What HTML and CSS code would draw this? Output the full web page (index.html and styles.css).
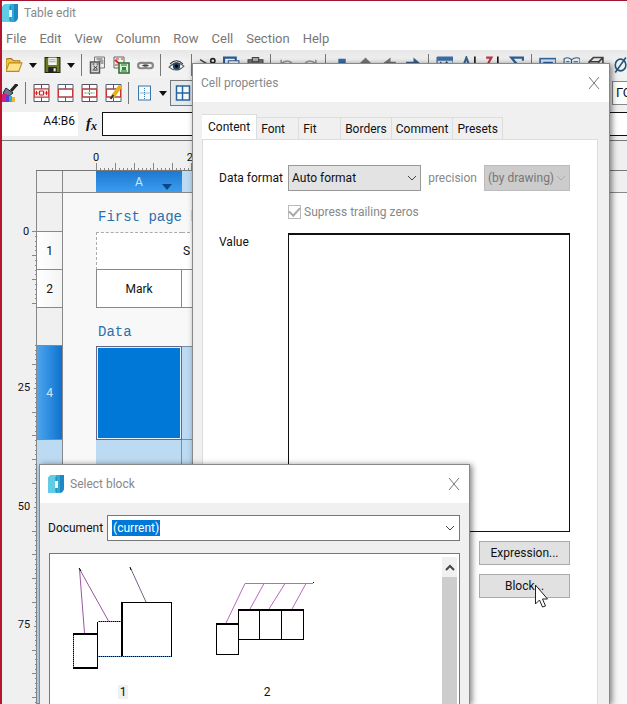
FILE: index.html
```html
<!DOCTYPE html>
<html lang="en">
<head>
<meta charset="utf-8">
<title>Table edit</title>
<link rel="stylesheet" href="styles.css">
</head>
<body>
<div class="app">
  <header class="titlebar">
    <svg class="logo" viewBox="0 0 16 18"><path d="M5 0H16V13Q16 18 11 18H0V5Q0 0 5 0Z" fill="#2fa9d6"/><path d="M5 0H8V18H0V5Q0 0 5 0Z" fill="#62cbe6"/><path d="M12 0h4v13q0 3-4 5z" fill="#2087c4"/><path d="M7 6h3v7H7z" fill="#e9fbff"/><path d="M8 2v4M8 13v4" stroke="#1685b5"/></svg>
    <span>Table edit</span>
  </header>
  <nav class="menu">
    <a href="#">File</a><a href="#">Edit</a><a href="#">View</a><a href="#">Column</a><a href="#">Row</a><a href="#">Cell</a><a href="#">Section</a><a href="#">Help</a>
  </nav>
  <div class="toolbar">
    <button class="tool" aria-label="Open"><svg viewBox="0 0 16 16"><path d="M0 14V3l1-1h4l2 2h6v3" fill="#f4c542" stroke="#a87716"/><path d="M0 14L3 6h12l-3 8z" fill="#ffe28a" stroke="#b98a1d"/></svg></button>
    <button class="caret" aria-label="Open options"></button>
    <button class="tool" aria-label="Save"><svg viewBox="0 0 16 16"><path d="M1 1h14v14H1z" fill="#6b7a22" stroke="#20240c"/><path d="M4 1h8v7H4z" fill="#f4f6f4"/><path d="M5 3h6M5 5h6" stroke="#9aa"/><path d="M4 10h8v5H4z" fill="#222"/><path d="M9 11h2v3H9z" fill="#eee"/></svg></button>
    <button class="caret" aria-label="Save options"></button>
    <i class="sep"></i>
    <button class="tool" aria-label="Copy properties"><svg viewBox="0 0 16 18"><path d="M5 1h10v11H5z" fill="#eee" stroke="#777"/><path d="M7 3h6M9 5h5M11 7h3" stroke="#555"/><path d="M1 6h9v11H1z" fill="#d8d8d8" stroke="#555" stroke-width="1.500"/><path d="M3 8h2M7 8h2M3 14h5M4 10l4 3M8 10l-4 3" stroke="#333"/></svg></button>
    <button class="tool" aria-label="Paste properties"><svg viewBox="0 0 17 18"><path d="M1 1h10v11H1z" fill="#f5eeee" stroke="#666"/><path d="M2 4l6 5" stroke="#d22" stroke-width="2"/><path d="M3 3h3M8 3h2M2 9h3" stroke="#b33"/><path d="M6 7h10v10H6z" fill="#d8f0d4" stroke="#286a2c" stroke-width="1.500"/><path d="M8 9h6M8 15h6" stroke="#286a2c"/><path d="M9 11h4v3H9z" fill="#2c8b35"/></svg></button>
    <button class="tool" aria-label="Link"><svg viewBox="0 0 16 16"><rect x="1" y="6" width="8" height="5" rx="2.5" fill="none" stroke="#888" stroke-width="2"/><rect x="7" y="6" width="8" height="5" rx="2.5" fill="none" stroke="#888" stroke-width="2"/><path d="M5 8.500h6" stroke="#444"/></svg></button>
    <i class="sep"></i>
    <button class="tool" aria-label="Preview"><svg viewBox="0 0 16 16"><path d="M1 10Q8 3 15 9Q8 16 1 10Z" fill="#fff" stroke="#555"/><circle cx="8" cy="9" r="3.500" fill="#246"/><circle cx="8" cy="9" r="1.500" fill="#000"/><path d="M2 7Q8 1 14 7" fill="none" stroke="#333"/></svg></button>
    <i class="sep"></i>
    <button class="tool" aria-label="Cut"><svg viewBox="0 0 16 16"><path d="M1 3l10 6M13 6L4 13" stroke="#444" stroke-width="1.500"/><circle cx="13" cy="4" r="2" fill="none" stroke="#222" stroke-width="1.500"/></svg></button>
    <button class="tool" aria-label="Copy"><svg viewBox="0 0 16 16"><path d="M1 1h11v11H1z" fill="#eef5ff" stroke="#2d5a94" stroke-width="2"/><path d="M5 4h10v11H5z" fill="#fff" stroke="#2d5a94"/></svg></button>
    <button class="tool" aria-label="Paste"><svg viewBox="0 0 16 16"><path d="M1 3h14v12H1z" fill="#777" stroke="#444"/><path d="M5 1h6v4H5z" fill="#aaa" stroke="#444"/></svg></button>
    <i class="sep"></i>
    <button class="tool" aria-label="Undo"><svg viewBox="0 0 16 16"><path d="M3 3v5h5M3 7Q8 2 13 6" fill="none" stroke="#999" stroke-width="1.500"/></svg></button>
    <button class="tool" aria-label="Redo"><svg viewBox="0 0 16 16"><path d="M13 3v5H8M13 7Q8 2 3 6" fill="none" stroke="#999" stroke-width="1.500"/></svg></button>
    <i class="sep"></i>
    <button class="tool" aria-label="Move down"><svg viewBox="0 0 16 16"><path d="M5 2h7v4h4l-7 8-8-8h4z" fill="#3c6da6"/></svg></button>
    <button class="tool" aria-label="Move up"><svg viewBox="0 0 16 16"><path d="M8 1l7 7h-4v7H5V8H1z" fill="#777"/></svg></button>
    <button class="tool" aria-label="Move left"><svg viewBox="0 0 16 16"><path d="M9 1v4h5v5H9v4L1 7z" fill="#777"/></svg></button>
    <button class="tool" aria-label="Move right"><svg viewBox="0 0 16 16"><path d="M8 1v14l7-8zM1 5h7v5H1z" fill="#3f5f87"/></svg></button>
    <i class="sep"></i>
    <button class="tool" aria-label="Filter"><svg viewBox="0 0 16 16"><path d="M1 1h15v13H1z" fill="#dcebf8" stroke="#315e93"/><path d="M1 0h15v4H1z" fill="#3c6da6"/><path d="M4 5l3 4 3-4 3 4" fill="none" stroke="#444"/></svg></button>
    <button class="tool" aria-label="Sort ascending"><svg viewBox="0 0 16 16"><path d="M2 12L6 1l4 11M4 7h5" fill="none" stroke="#3c6493" stroke-width="2"/><path d="M14 0v15" stroke="#111" stroke-width="1.500"/></svg></button>
    <button class="tool" aria-label="Sort descending"><svg viewBox="0 0 16 16"><path d="M2 1h5L2 10h5" fill="none" stroke="#b43a46" stroke-width="2"/><path d="M13 0v15" stroke="#111" stroke-width="1.500"/></svg></button>
    <button class="tool" aria-label="Sum"><svg viewBox="0 0 16 16"><path d="M14 4V1H3l6 7-6 6h11v-3" fill="none" stroke="#2c5c94" stroke-width="2"/></svg></button>
    <i class="sep"></i>
    <button class="tool" aria-label="Field"><svg viewBox="0 0 16 16"><rect x="1" y="2" width="15" height="12" fill="#d5e8f8" stroke="#2f659f" stroke-width="1.500"/><path d="M4 6h9" stroke="#2f659f" stroke-width="2"/></svg></button>
    <button class="tool" aria-label="Library"><svg viewBox="0 0 16 16"><path d="M1 2q4-2 7 1q4-3 8-1v12H1zM8 3v11" fill="#edf5fb" stroke="#3a5878"/><path d="M3 5h3M10 5h4" stroke="#3a5878"/></svg></button>
    <button class="tool" aria-label="Block"><svg viewBox="0 0 16 16"><path d="M2 5l4-4h9v9l-4 4H2zM2 5h9v9M11 5l4-4" fill="#eee" stroke="#444" stroke-width="1.500"/></svg></button>
    <button class="tool" aria-label="Diameter"><svg viewBox="0 0 16 16"><ellipse cx="9" cy="8" rx="5" ry="5.500" fill="none" stroke="#23567f" stroke-width="1.500"/><path d="M4 15L14 1" stroke="#23567f" stroke-width="1.500"/></svg></button>
  </div>
  <div class="toolbar second">
    <button class="tool brush" aria-label="Match format"><svg viewBox="0 0 16 18"><path d="M15 0L9 7" stroke="#222" stroke-width="3"/><path d="M4 4L11 9l-5 4-5-4z" fill="#667b8f" stroke="#222"/><path d="M0 10h5v8H0z" fill="#d21f7b"/><path d="M4 11h4v7H4z" fill="#6339d6"/><path d="M7 12h3v6H7z" fill="#1bb4c9"/><path d="M10 13h3v5h-3z" fill="#f3b72d"/></svg></button>
    <i class="sep"></i>
    <button class="tool" aria-label="Merge"><svg viewBox="0 0 16 18"><path d="M.500 .500h15v17H.500zM.500 5h15M.500 13h15M8 .500V5M8 13v4.500" fill="#fff" stroke="#5b4f5d"/><path d="M1 5h14v8H1z" fill="#fbe9e9" stroke="#c44"/><path d="M1 9h4M11 9h4M3 7v4M13 7v4M6 11V7h4v4z" fill="none" stroke="#c22"/></svg></button>
    <button class="tool" aria-label="Split"><svg viewBox="0 0 16 18"><path d="M.500 .500h15v17H.500zM.500 5h15M.500 13h15M8 .500V5M8 13v4.500" fill="#fff" stroke="#4d6077"/><path d="M1 5h14v8H1z" fill="none" stroke="#c33"/></svg></button>
    <button class="tool" aria-label="Split cells"><svg viewBox="0 0 16 18"><path d="M.500 .500h15v17H.500zM.500 5h15M.500 13h15M8 .500V5M8 13v4.500" fill="#fff" stroke="#594f5d"/><path d="M1 5h14v8H1z" fill="none" stroke="#c33"/><path d="M3 9h10M8 6v6" stroke="#3a9b50" stroke-dasharray="2 1"/></svg></button>
    <button class="tool" aria-label="Edit cell"><svg viewBox="0 0 16 18"><path d="M.500 .500h15v17H.500zM.500 5h15M.500 13h15M8 .500V5M8 13v4.500" fill="#fff" stroke="#4d6077"/><path d="M1 5h14v8H1z" fill="none" stroke="#c33"/><path d="M15 2L7 13" stroke="#e6b11e" stroke-width="4"/><path d="M8 11l-3 4" stroke="#333" stroke-width="2"/></svg></button>
    <i class="sep"></i>
    <button class="tool" aria-label="Borders"><svg viewBox="0 0 16 18"><rect x="2" y="2" width="12" height="14" fill="#f4f9fd" stroke="#3976aa"/><path d="M8 4v11M4 9h9" stroke="#3976aa" stroke-dasharray="1 1"/></svg></button>
    <button class="caret" aria-label="Border options"></button>
    <button class="tool pressed" aria-label="Grid"><svg viewBox="0 0 16 18"><path d="M2 2h13v14H2zM8 2v14M2 9h13" fill="#f4f9fd" stroke="#28659d" stroke-width="1.500"/></svg></button>
    <select class="standard" aria-label="Standard"><option>ГО</option></select>
  </div>
  <div class="formula">
    <output class="address">A4:B6</output>
    <label class="fx" for="formula">f<sub>x</sub></label>
    <input id="formula" type="text">
  </div>
  <main class="sheet">
    <div class="corner"></div>
    <svg class="top-ruler">
      <defs><pattern id="hx" x="60" y="0" width="19" height="30" patternUnits="userSpaceOnUse"><path d="M.500 22v8M4.500 27v3M8.500 27v3M12.500 27v3M16.500 27v3" stroke="#888"/></pattern></defs>
      <rect x="60" width="306" height="30" fill="url(#hx)"/>
      <text x="60" y="20">0</text><text x="157" y="20">25</text>
    </svg>
    <svg class="left-ruler">
      <defs><pattern id="vx" x="0" y="61" width="36" height="24" patternUnits="userSpaceOnUse"><path d="M30 .500h6M33 5.500h3M33 10.500h3M33 15.500h3M33 19.500h3" stroke="#888"/></pattern>
      <pattern id="vy" x="0" y="194" width="36" height="119" patternUnits="userSpaceOnUse"><path d="M30 .500h6M33 5.500h3M33 10.500h3M33 14.500h3M33 19.500h3M32 24.500h4M33 29.500h3M33 33.500h3M33 38.500h3M33 43.500h3M30 48.500h6M33 52.500h3M33 57.500h3M33 62.500h3M33 67.500h3M30 71.500h6M33 76.500h3M33 81.500h3M33 86.500h3M33 90.500h3M30 95.500h6M33 100.500h3M33 105.500h3M33 109.500h3M33 114.500h3" stroke="#888"/></pattern></defs>
      <rect y="61" width="36" height="76" fill="url(#vx)"/>
      <rect y="175" width="36" height="100%" fill="url(#vy)"/>
      <text x="24" y="65">0</text><text x="22" y="221">25</text><text x="22" y="340">50</text><text x="22" y="458">75</text>
    </svg>
    <table class="cells">
      <colgroup><col class="c-head"><col class="c-gap"><col class="c-a"><col class="c-b"><col></colgroup>
      <tr class="r-head"><th></th><th class="plain"></th><th class="col-a">A <i class="menu-mark"></i></th><th class="col-b"></th><th class="plain"></th></tr>
      <tr class="r-first"><th></th><td></td><td class="section" colspan="3">First page h</td></tr>
      <tr class="r-row"><th class="num">1</th><td></td><td class="dashed"></td><td class="spec">S</td><td></td></tr>
      <tr class="r-row"><th class="num">2</th><td></td><td class="mark">Mark</td><td class="box"></td><td></td></tr>
      <tr class="r-row"><th></th><td></td><td class="section" colspan="3">Data</td></tr>
      <tr class="r-data"><th class="selected">4</th><td></td><td class="active"></td><td class="range"></td><td></td></tr>
      <tr><th class="soft"></th><td></td><td class="range"></td><td class="range"></td><td></td></tr>
    </table>
  </main>
</div>

<section class="dialog props" aria-label="Cell properties">
  <header class="dialog-head"><span>Cell properties</span>
    <button class="close" aria-label="Close"><svg viewBox="0 0 12 14"><path d="M1 1l10 12M11 1L1 13" stroke="#777"/></svg></button></header>
  <div class="tabs" role="tablist">
    <button class="tab current" role="tab">Content</button><button class="tab t-font" role="tab">Font</button><button class="tab t-font" role="tab">Fit</button><button class="tab" role="tab">Borders</button><button class="tab" role="tab">Comment</button><button class="tab" role="tab">Presets</button>
  </div>
  <div class="panel">
    <label for="format">Data format</label>
    <div class="format">
      <span class="combo grow"><select id="format"><option>Auto format</option></select><svg viewBox="0 0 10 6"><path d="M1 1l4 4 4-4" fill="none" stroke="#444"/></svg></span>
      <label class="muted" for="precision">precision</label>
      <span class="combo off"><select id="precision" disabled><option>(by drawing)</option></select><svg viewBox="0 0 10 6"><path d="M1 1l4 4 4-4" fill="none" stroke="#aaa"/></svg></span>
    </div>
    <label class="check muted"><input type="checkbox" checked disabled>Supress trailing zeros</label>
    <label class="value-label" for="value">Value</label>
    <textarea id="value"></textarea>
    <div class="actions"><button>Expression...</button><button>Block...</button></div>
  </div>
</section>

<section class="dialog blocks" aria-label="Select block">
  <header class="dialog-head">
    <svg class="logo" viewBox="0 0 16 18"><path d="M5 0H16V13Q16 18 11 18H0V5Q0 0 5 0Z" fill="#2fa9d6"/><path d="M5 0H8V18H0V5Q0 0 5 0Z" fill="#62cbe6"/><path d="M12 0h4v13q0 3-4 5z" fill="#2087c4"/><path d="M7 6h3v7H7z" fill="#e9fbff"/><path d="M8 2v4M8 13v4" stroke="#1685b5"/></svg>
    <span>Select block</span>
    <button class="close" aria-label="Close"><svg viewBox="0 0 12 14"><path d="M1 1l10 12M11 1L1 13" stroke="#777"/></svg></button></header>
  <div class="document"><span id="doc-label">Document</span>
    <button class="doc-combo" role="combobox" aria-labelledby="doc-label doc-value" aria-expanded="false"><mark id="doc-value">(current)</mark><svg viewBox="0 0 10 6"><path d="M1 1l4 4 4-4" fill="none" stroke="#444"/></svg></button></div>
  <div class="list">
    <div class="thumbs">
      <figure><svg viewBox="0 0 144 122"><g fill="none" shape-rendering="crispEdges"><path d="M23.500 79.500h24v34h-24z" stroke="#000"/><path d="M23 79.500h24M23.500 80v33" stroke="#5a86b5" stroke-dasharray="1 1"/><path d="M23 113.500h25" stroke="#000" stroke-width="2"/><path d="M47.500 67.500v35h74V48.500H72v54" stroke="#000"/><path d="M72 48v54M23 80h24" stroke="#000" stroke-width="2"/><path d="M48 67.500h24" stroke="#000"/><path d="M48 67.500h24M48 102.500h73" stroke="#5a86b5" stroke-dasharray="1 1"/></g><path d="M29.500 15l5 64M29.500 15l29 52" stroke="#9b55a5" fill="none"/><path d="M80.500 14l15.500 34" stroke="#7b6088"/><path d="M29 14l2 3M80 13l1 3" stroke="#000"/></svg><figcaption><span>1</span></figcaption></figure>
      <figure><svg viewBox="0 0 144 122"><g fill="none" stroke="#000" shape-rendering="crispEdges"><path d="M22.500 69.500h22v31h-22zM44.500 55.500h65v30h-65zM65.500 55v30M87.500 55v30"/><path d="M22 70h23M44 56h66" stroke-width="2"/></g><path d="M119 29.500H51L32 69M70 29.500L56 55M91 29.500L75 55M112 29.500L98 55" fill="none" stroke="#bd67bd"/><path d="M119 28.500h1" stroke="#000"/></svg><figcaption>2</figcaption></figure>
    </div>
    <div class="scroll"><button aria-label="Scroll up"><svg viewBox="0 0 10 7"><path d="M1 6l4-4 4 4" fill="none" stroke="#444" stroke-width="2"/></svg></button></div>
  </div>
</section>
<svg class="pointer" viewBox="0 0 13 24"><path d="M.500 1v19l4-4 3 7 3-1-3-7h5z" fill="#fff" stroke="#222"/></svg>
</body>
</html>
```
FILE: styles.css
```css
* { box-sizing: border-box; }
body { margin: 0; height: 100vh; overflow: hidden; position: relative; font: 12px/16px Roboto, "Liberation Sans", sans-serif; color: #111; background: #f0f0f0; }
button, input, select, textarea { font: inherit; color: inherit; margin: 0; padding: 0; border: 0; border-radius: 0; background: none; appearance: none; }
svg { display: block; }

.app { height: 100%; display: flex; flex-direction: column; border-left: 2px solid #b5142c; border-top: 1px solid #a01530; }
.titlebar { height: 23px; flex: none; display: flex; align-items: center; gap: 6px; background: #fff; color: #888; }
.logo { width: 16px; height: 18px; }
.menu { height: 26px; flex: none; display: flex; align-items: center; gap: 13px; padding: 4px 4px 0; background: #fff; font-size: 13px; }
.menu a { color: #777; text-decoration: none; }

.toolbar { height: 28px; flex: none; display: flex; align-items: center; overflow: hidden; padding-top: 2px; background: linear-gradient(#e7e7e7, #f2f2f2 40%); }
.tool { width: 24px; height: 24px; flex: none; display: grid; place-items: center; }
.tool svg { width: 17px; height: 18px; }
.caret { width: 14px; height: 24px; flex: none; display: grid; place-items: center; }
.caret::before { content: ""; border: 4px solid transparent; border-top: 5px solid #111; border-bottom: 0; }
.sep { width: 7px; height: 22px; flex: none; background: linear-gradient(#777, #777) center / 1px 100% no-repeat; }
.second { height: 30px; padding: 0; background: #f0f0f0; }
.brush { width: 20px; justify-items: start; }
.brush svg { width: 16px; }
.pressed { height: 26px; border: 1px solid #777; background: #e4e9ee; }
.standard { width: 15px; height: 24px; margin-left: auto; padding-left: 3px; border: 1px solid #888; border-right: 0; background: #fff; font-size: 13px; }

.formula { height: 33px; flex: none; display: flex; padding: 4px 0; border-bottom: 1px solid #777; }
.address { width: 76px; padding: 1px 3px; background: #fff; text-align: right; }
.fx { width: 24px; padding: 3px 0 0 8px; font: italic bold 15px/16px "Liberation Serif", serif; }
.fx sub { font-size: 12px; line-height: 8px; vertical-align: -2px; }
.formula input { flex: 1; min-width: 0; border: 1px solid #111; border-right: 0; background: #fff; }

.sheet { flex: 1; min-height: 0; overflow: hidden; display: grid; grid-template: 29px 1fr / 34px 1fr; background: #f0f0f0; }
.top-ruler { width: 100%; height: 29px; }
.left-ruler { width: 34px; height: 100%; }
.sheet text { font-size: 11px; fill: #111; text-anchor: middle; }
.cells { width: 100%; height: 100%; table-layout: fixed; border-collapse: separate; border-spacing: 0; border-top: 1px solid #777; background: #f8f8f8; }
.c-head { width: 27px; } .c-gap { width: 33px; } .c-a { width: 86px; } .c-b { width: 220px; }
.r-head { height: 22px; } .r-first { height: 39px; } .r-row { height: 38px; } .r-data { height: 94px; }
.cells th, .cells td { padding: 0; font-weight: 400; text-align: center; }
.cells th { border-bottom: 1px solid #888; background: #f0f0f0; }
.cells th:first-child { border-left: 1px solid #888; border-right: 1px solid #888; }
.cells .num { background: linear-gradient(90deg, #fff, #f4f4f4); }
.cells .col-a { position: relative; color: #cfe8ff; background: linear-gradient(#1e78cf, #3a9df0); }
.menu-mark { position: absolute; right: 10px; bottom: 2px; border: 5px solid transparent; border-top: 6px solid #0b4787; border-bottom: 0; }
.cells .col-b, .cells .soft { background: #bcdaf2; }
.cells .selected { color: #cfe8ff; background: linear-gradient(90deg, #4da5ee, #0f72cf); }
.cells .section { padding: 16px 0 0 2px; text-align: left; vertical-align: top; color: #2a6fae; font: 14px/16px "Liberation Mono", monospace; }
.cells .dashed { border: 1px dashed #aaa; border-right: 0; border-bottom: 1px solid #888; background: #fff; }
.cells .spec { padding-left: 1px; text-align: left; border-top: 1px dashed #aaa; border-bottom: 1px solid #888; background: #fff; }
.cells .mark { border: 1px solid #888; border-top: 0; background: #fff; }
.cells .box { border-bottom: 1px solid #888; background: #fff; }
.cells .range { border: 1px solid #7890a5; border-left: 0; border-top: 0; background: #bcdaf2; }
.r-data td.range { border-top: 1px solid #7890a5; }
.cells .active { border: 1px solid #668; background: #0078d7; box-shadow: inset 0 0 0 1px #e4f2ff; }

.dialog { position: absolute; bottom: 0; display: flex; flex-direction: column; border: 1px solid #888; border-bottom: 0; background: #f0f0f0; box-shadow: 2px 1px 6px rgba(0, 0, 0, .5); }
.props { top: 63px; left: 192px; right: 17px; }
.blocks { top: 464px; left: 39px; right: 157px; }
.dialog-head { height: 38px; flex: none; display: flex; align-items: center; gap: 6px; padding: 0 9px 0 8px; background: #fff; color: #888; }
.close { margin-left: auto; width: 12px; height: 14px; }
.tabs { flex: none; display: flex; align-items: flex-end; height: 37px; padding: 0 9px; }
.tab { height: 22px; padding: 0 4px; border: 1px solid #ddd; border-bottom: 0; border-left: 0; text-align: left; }
.tab.current { height: 25px; padding: 0 6px; background: #fff; }
.t-font { width: 42px; }
.panel { flex: 1; min-height: 0; margin: 0 11px 0 9px; padding: 25px 27px 0 16px; display: grid; grid-template: 26px 28px 313px auto / 69px 1fr; align-items: center; align-content: start; background: #fff; border: 1px solid #ddd; border-bottom: 0; }
.format { display: flex; align-items: center; gap: 7px; }
.combo { position: relative; height: 26px; width: 86px; }
.combo.grow { width: auto; flex: 1; }
.combo select { width: 100%; height: 100%; padding: 0 3px; border: 1px solid #999; background: #e3e3e3; opacity: 1; }
.combo.off select { border-color: #bbb; background: #ccc; color: #777; }
.combo svg { position: absolute; right: 4px; top: 10px; width: 10px; height: 6px; }
.muted { color: #888; }
.check { grid-column: 2; display: flex; align-items: center; gap: 3px; padding-top: 14px; }
.check input { width: 13px; height: 14px; border: 1px solid #bbb; display: grid; place-items: center; }
.check input::before { content: ""; width: 9px; height: 5px; border: solid #aaa; border-width: 0 0 2px 2px; rotate: -48deg; margin-bottom: 3px; }
.value-label { align-self: start; padding-top: 15px; }
.panel textarea { align-self: end; width: 100%; height: 299px; border: 1px solid #111; border-top-width: 2px; resize: none; background: #fff; }
.actions { grid-column: 2; justify-self: end; width: 91px; display: grid; gap: 9px; padding-top: 9px; }
.actions button { height: 24px; border: 1px solid #aaa; background: #e1e1e1; }

.document { display: flex; align-items: center; gap: 4px; padding: 12px 9px 12px 8px; }
.doc-combo { flex: 1; display: flex; align-items: center; justify-content: space-between; height: 26px; padding: 0 4px; border: 1px solid #777; background: #fff; }
.doc-combo svg { width: 10px; height: 6px; }
.doc-combo mark { padding: 0 1px; background: #0078d7; color: #fff; }
.list { flex: 1; min-height: 0; display: flex; margin: 0 9px; border: 1px solid #777; border-bottom: 0; background: #fff; }
.thumbs { flex: 1; display: flex; overflow: hidden; }
figure { width: 144px; flex: none; margin: 0; }
figure svg { width: 144px; height: 122px; }
figcaption { padding: 8px 0 0 2px; text-align: center; }
figcaption span { padding: 0 2px; background: #f0f0f0; }
.scroll { width: 15px; margin: 3px 2px 0 0; background: #cdcdcd; }
.scroll button { width: 15px; height: 20px; display: grid; place-items: center; background: #f0f0f0; }
.scroll svg { width: 10px; height: 7px; }
.pointer { position: absolute; left: 535px; top: 584px; width: 13px; height: 24px; }
```
